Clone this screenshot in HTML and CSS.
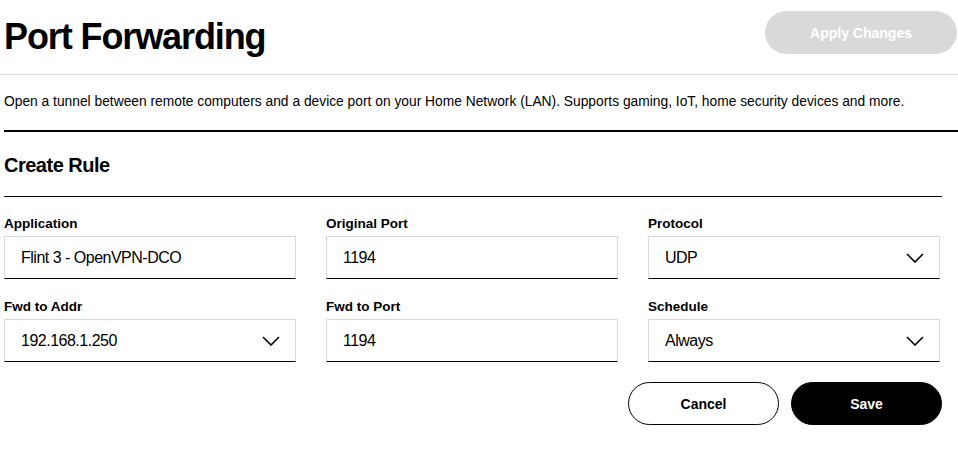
FILE: index.html
```html
<!DOCTYPE html>
<html>
<head>
  <link rel="stylesheet" href="styles.css">
</head>
<body>
  <div class="page-header">
    <h1>Port Forwarding</h1>
    <button class="btn-apply" disabled>Apply Changes</button>
  </div>

  <p class="intro">Open a tunnel between remote computers and a device port on your Home Network (LAN). Supports gaming, IoT, home security devices and more.</p>

  <div class="rule-section">
    <h2>Create Rule</h2>

    <div class="rule-grid">
      <div class="field">
        <label>Application</label>
        <div class="box">Flint 3 - OpenVPN-DCO</div>
      </div>
      <div class="field">
        <label>Original Port</label>
        <div class="box">1194</div>
      </div>
      <div class="field">
        <label>Protocol</label>
        <div class="box select">UDP
          <svg class="chevron" width="18" height="10" viewBox="0 0 18 10"><path d="M1 1 L9 9 L17 1" fill="none" stroke="#000" stroke-width="1.6"/></svg>
        </div>
      </div>
      <div class="field">
        <label>Fwd to Addr</label>
        <div class="box select">192.168.1.250
          <svg class="chevron" width="18" height="10" viewBox="0 0 18 10"><path d="M1 1 L9 9 L17 1" fill="none" stroke="#000" stroke-width="1.6"/></svg>
        </div>
      </div>
      <div class="field">
        <label>Fwd to Port</label>
        <div class="box">1194</div>
      </div>
      <div class="field">
        <label>Schedule</label>
        <div class="box select">Always
          <svg class="chevron" width="18" height="10" viewBox="0 0 18 10"><path d="M1 1 L9 9 L17 1" fill="none" stroke="#000" stroke-width="1.6"/></svg>
        </div>
      </div>
    </div>

    <div class="actions">
      <button class="btn btn-cancel">Cancel</button>
      <button class="btn btn-save">Save</button>
    </div>
  </div>
</body>
</html>
```

FILE: styles.css
```css
body {
  margin: 0;
  font-family: "Liberation Sans", Arial, sans-serif;
  color: #000;
  background-color: #fff;
}
.page-header {
  display: flex;
  justify-content: space-between;
  align-items: flex-start;
  height: 74px;
  padding: 0 1px 0 4px;
  border-bottom: 1px solid #d8dada; /* light gray divider */
}
h1 {
  margin: 19px 0 0 0;
  font-size: 36px;
  line-height: 36px;
  font-weight: bold;
  letter-spacing: -1.1px;
}
.btn-apply {
  margin-top: 11px;
  width: 192px;
  height: 43px;
  border: none;
  border-radius: 22px;
  background-color: #d8dada;
  color: #fff;
  font-family: "Liberation Sans", Arial, sans-serif;
  font-size: 14px;
  font-weight: bold;
}
.intro {
  margin: 17px 0 18px 4px;
  font-size: 13.8px;
  line-height: 20px;
}
.rule-section {
  margin-left: 4px;
  border-top: 2px solid #000;
}
h2 {
  margin: 0 16px 0 0;
  padding: 21px 0 19px 0;
  font-size: 20px;
  line-height: 24px;
  letter-spacing: -0.5px;
  border-bottom: 1px solid #000;
}
.rule-grid {
  display: grid;
  grid-template-columns: 1fr 1fr 1fr;
  column-gap: 30px;
  row-gap: 20px;
  margin: 19px 18px 0 0;
}
.field label {
  display: block;
  font-size: 13.5px;
  line-height: 16px;
  font-weight: bold;
  margin-bottom: 4px;
}
.box {
  display: flex;
  align-items: center;
  justify-content: space-between;
  height: 41px;
  padding: 0 16px;
  border: 1px solid #d8dada;
  border-bottom-color: #000;
  font-size: 16px;
  letter-spacing: -0.5px;
}
.chevron {
  margin-right: -1px;
}
.actions {
  display: flex;
  justify-content: flex-end;
  gap: 12px;
  margin: 20px 16px 0 0;
}
.btn {
  width: 151px;
  height: 43px;
  border-radius: 22px;
  font-family: "Liberation Sans", Arial, sans-serif;
  font-size: 14px;
  font-weight: bold;
  cursor: pointer;
}
.btn-cancel {
  background-color: #fff;
  border: 1px solid #000;
  color: #000;
}
.btn-save {
  background-color: #000;
  border: 1px solid #000;
  color: #fff;
}
```
